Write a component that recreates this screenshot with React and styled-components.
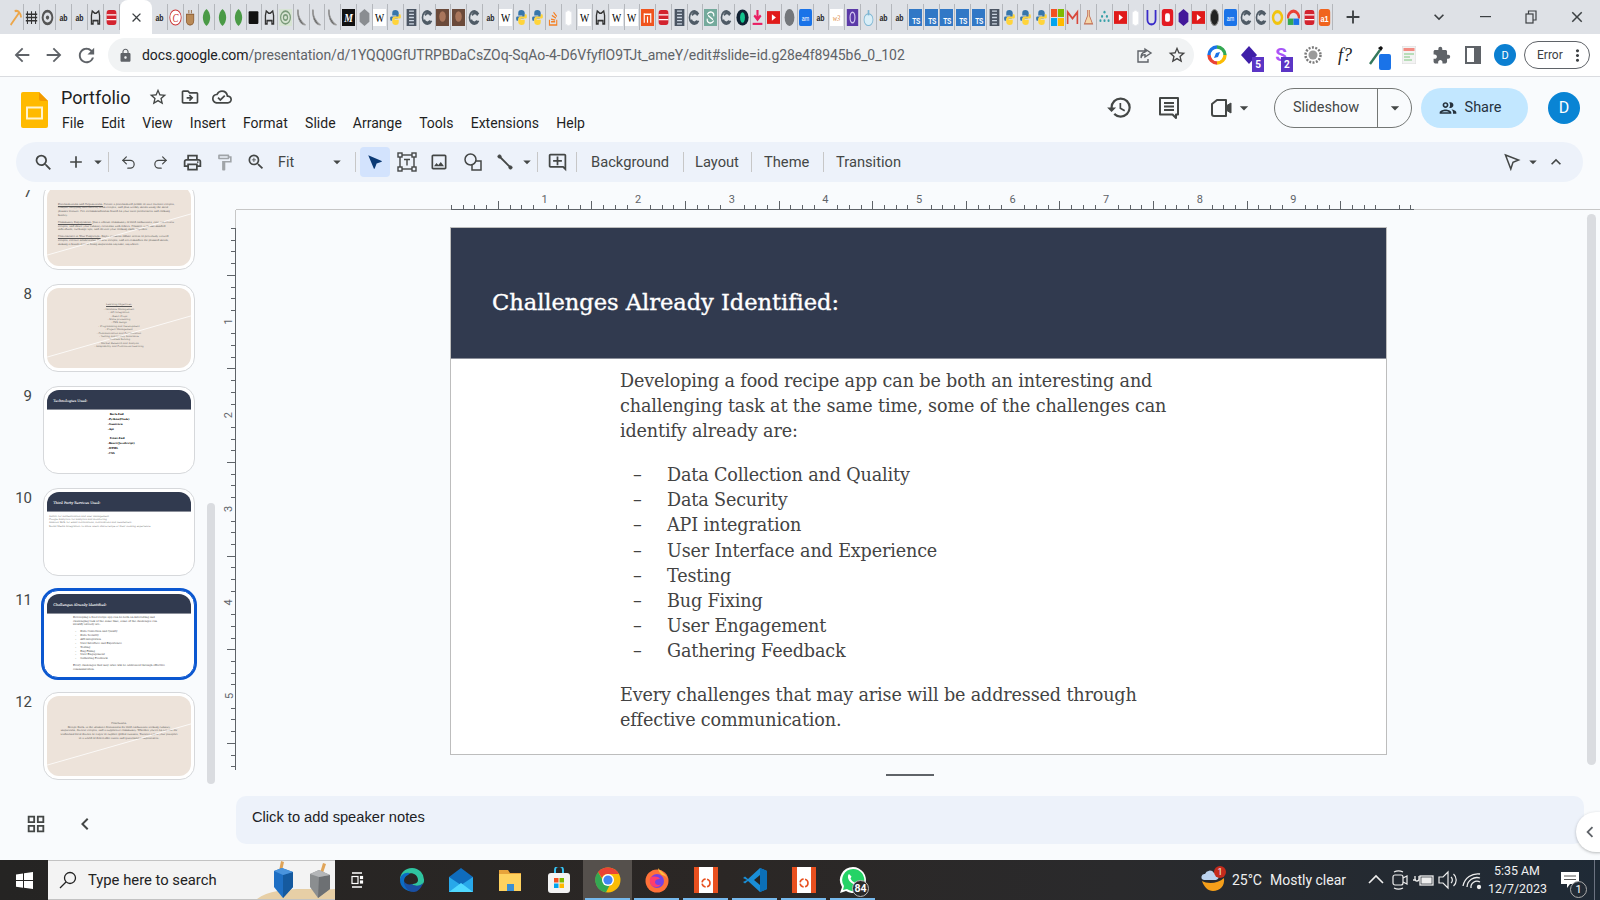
import styled, { createGlobalStyle } from "styled-components";
import { Redo2, Undo2 } from "lucide-react";
import {
  MdAdd,
  MdArrowBack,
  MdArrowDropDown,
  MdArrowForward,
  MdChevronLeft,
  MdClose,
  MdExpandLess,
  MdExtension,
  MdHistory,
  MdKeyboardArrowDown,
  MdLock,
  MdMoreVert,
  MdNearMe,
  MdOutlineAddComment,
  MdOutlineCloudDone,
  MdOutlineDriveFileMove,
  MdOutlineFormatPaint,
  MdOutlineGridView,
  MdOutlineImage,
  MdOutlinePeople,
  MdOutlinePrint,
  MdOutlineStarBorder,
  MdRefresh,
  MdSearch,
  MdZoomIn,
} from "react-icons/md";

const UI = `Roboto, "Noto Sans", sans-serif`;
const SERIF = `"DejaVu Serif", "Liberation Serif", serif`;

const GlobalStyle = createGlobalStyle`
  html, body { margin: 0; padding: 0; background: #f9fbfd; }
  body { width: 1600px; height: 900px; overflow: hidden; font-family: ${UI}; }
  * { box-sizing: border-box; }
  svg { display: block; flex-shrink: 0; }
`;

const Page = styled.div`
  width: 1600px;
  height: 900px;
  display: flex;
  flex-direction: column;
  overflow: hidden;
`;

/* ---------- browser chrome ---------- */

const TabStrip = styled.div`
  height: 34px;
  background: #dee1e6;
  display: flex;
  align-items: center;
  padding-left: 8px;
`;

const FavSlot = styled.div`
  width: ${(p) => p.$w || 16}px;
  height: 26px;
  flex-shrink: 0;
  display: flex;
  align-items: center;
  justify-content: center;
  border-right: 1px solid #b4b7bc;
`;

const ActiveTab = styled.div`
  width: 32px;
  height: 34px;
  background: #fff;
  border-radius: 8px 8px 0 0;
  display: flex;
  align-items: center;
  justify-content: center;
  color: #3c4043;
  flex-shrink: 0;
`;

const NewTab = styled.div`
  width: 20px;
  margin-left: 10px;
  color: #3c4043;
  display: flex;
  justify-content: center;
`;

const WindowButtons = styled.div`
  margin-left: auto;
  display: flex;
  align-items: center;
  color: #3c4043;
`;

const WinButton = styled.div`
  width: 46px;
  display: flex;
  justify-content: center;
`;

const AddressRow = styled.div`
  height: 42px;
  background: #fff;
  display: flex;
  align-items: center;
  padding-left: 6px;
  color: #5f6368;
`;

const NavButton = styled.div`
  width: 32px;
  display: flex;
  justify-content: center;
`;

const UrlPill = styled.div`
  width: 1086px;
  margin-left: 6px;
  height: 34px;
  border-radius: 17px;
  background: #f1f3f4;
  display: flex;
  align-items: center;
  padding: 0 7px 0 10px;
  font-size: 14px;
  color: #5f6368;
`;

const UrlText = styled.span`
  margin-left: 9px;
  letter-spacing: -0.1px;
  white-space: nowrap;
  & b {
    font-weight: 400;
    color: #202124;
  }
`;

const PillIcons = styled.div`
  margin-left: auto;
  display: flex;
  gap: 14px;
  align-items: center;
`;

const ExtRow = styled.div`
  margin-left: 7px;
  display: flex;
`;

const ExtSlot = styled.div`
  width: 32px;
  height: 34px;
  display: flex;
  align-items: center;
  justify-content: center;
  color: #5f6368;
`;

const ChromeAvatar = styled.div`
  width: 22px;
  height: 22px;
  border-radius: 50%;
  background: #0b7fd1;
  color: #fff;
  font-size: 11px;
  display: flex;
  align-items: center;
  justify-content: center;
`;

const ErrorPill = styled.div`
  margin-left: 3px;
  width: 66px;
  height: 28px;
  border-radius: 14px;
  border: 1px solid #5f6368;
  display: flex;
  align-items: center;
  justify-content: space-between;
  padding: 0 2px 0 12px;
  font-size: 12px;
  color: #3c4043;
`;

/* ---------- docs header ---------- */

const Docs = styled.div`
  height: 784px;
  background: #f9fbfd;
  border-top: 1px solid #dadce0;
  display: flex;
  flex-direction: column;
`;

const DocsHeader = styled.div`
  height: 65px;
  display: flex;
  align-items: center;
  padding: 0 20px 0 21px;
`;

const TitleBlock = styled.div`
  margin: 0 0 2px 13px;
  display: flex;
  flex-direction: column;
  gap: 7px;
`;

const TitleRow = styled.div`
  display: flex;
  align-items: center;
  gap: 12px;
  color: #444746;
`;

const DocTitle = styled.span`
  font-size: 18px;
  color: #1f1f1f;
  margin-right: 6px;
`;

const MenuBar = styled.div`
  display: flex;
  gap: 17.3px;
  margin-left: 1px;
  font-size: 14px;
  color: #1f1f1f;
`;

const HeaderActions = styled.div`
  margin: 0 0 4px auto;
  display: flex;
  align-items: center;
  gap: 18px;
  color: #444746;
`;

const HeaderIcon = styled.div`
  width: 32px;
  display: flex;
  justify-content: center;
`;

const CameraGroup = styled.div`
  width: 53px;
  padding-left: 7px;
  display: flex;
  align-items: center;
`;

const SlideshowButton = styled.div`
  width: 138px;
  height: 40px;
  border-radius: 20px;
  border: 1px solid #747775;
  display: flex;
  align-items: center;
  font-size: 14.5px;
  color: #444746;
`;

const SlideshowLabel = styled.div`
  width: 103px;
  height: 100%;
  display: flex;
  align-items: center;
  justify-content: center;
  border-right: 1px solid #747775;
`;

const SlideshowCaret = styled.div`
  flex: 1;
  display: flex;
  justify-content: center;
`;

const ShareButton = styled.div`
  margin-left: -9px;
  width: 107px;
  height: 40px;
  border-radius: 20px;
  background: #c2e7ff;
  display: flex;
  align-items: center;
  justify-content: center;
  gap: 7px;
  padding-right: 10px;
  font-size: 14.5px;
  color: #26323d;
`;

const DocAvatar = styled.div`
  margin-left: 2px;
  width: 32px;
  height: 32px;
  border-radius: 50%;
  background: #0984d4;
  color: #fff;
  font-size: 16px;
  display: flex;
  align-items: center;
  justify-content: center;
`;

/* ---------- toolbar ---------- */

const Toolbar = styled.div`
  height: 40px;
  margin: 0 17px 0 16px;
  padding: 0 12px 0 11px;
  border-radius: 20px;
  background: #edf2fa;
  display: flex;
  align-items: center;
  color: #444746;
  flex-shrink: 0;
`;

const ToolButton = styled.div`
  width: ${(p) => p.$w || 32}px;
  height: 30px;
  margin-left: ${(p) => p.$ml || 0}px;
  flex-shrink: 0;
  display: flex;
  align-items: center;
  justify-content: center;
  border-radius: 4px;
  background: ${(p) => (p.$active ? "#d3e3fd" : "transparent")};
  color: ${(p) => (p.$active ? "#0b3a75" : "inherit")};
  opacity: ${(p) => (p.$faded ? 0.45 : 1)};
`;

const SelectArrow = styled(MdNearMe)`
  transform: scaleX(-1);
`;

const ToolSep = styled.div`
  width: 1px;
  height: 20px;
  background: #c7c7c7;
  margin: 0 ${(p) => p.$r ?? 3}px 0 ${(p) => p.$l ?? 4}px;
  flex-shrink: 0;
`;

const ToolText = styled.div`
  font-size: 14.7px;
  color: #444746;
  white-space: nowrap;
  width: ${(p) => p.$w}px;
  margin: 0 ${(p) => p.$r ?? 13}px 0 ${(p) => p.$l ?? 13}px;
`;

const FitSelect = styled.div`
  width: 74px;
  display: flex;
  align-items: center;
  justify-content: space-between;
  padding-left: 6px;
  font-size: 14.4px;
`;

const ToolbarEnd = styled.div`
  margin-left: auto;
  display: flex;
  align-items: center;
`;

/* ---------- workspace ---------- */

const Workspace = styled.div`
  flex: 1;
  min-height: 0;
  display: flex;
`;

const Filmstrip = styled.div`
  width: 222px;
  flex-shrink: 0;
  display: flex;
  flex-direction: column;
`;

const SlideList = styled.div`
  position: relative;
  margin-top: 8px;
  height: 594px;
  overflow: hidden;
  display: flex;
  flex-direction: column;
  justify-content: flex-end;
  gap: 14px;
  padding-bottom: 4px;
`;

const ThumbRow = styled.div`
  display: flex;
  flex-shrink: 0;
`;

const ThumbNumber = styled.div`
  width: 32px;
  text-align: right;
  font-size: 15px;
  color: #444746;
  padding-top: 1px;
`;

const Thumb = styled.div`
  margin-left: 11px;
  width: 152px;
  height: 88px;
  padding: 3px;
  background: #fff;
  border-radius: 15px;
  border: 1px solid ${(p) => (p.$selected ? "#0b57d0" : "#d6d8db")};
  box-shadow: ${(p) => (p.$selected ? "0 0 0 2px #0b57d0" : "none")};
  overflow: hidden;
`;

const ThumbInner = styled.div`
  width: 144px;
  height: 80px;
  border-radius: 12px;
  overflow: hidden;
`;

const ThumbZoom = styled.div`
  zoom: 0.154;
`;

const FilmScrollbar = styled.div`
  position: absolute;
  left: 207px;
  bottom: 0;
  width: 8px;
  height: 281px;
  border-radius: 4px;
  background: #dadce0;
`;

const FilmFooter = styled.div`
  flex: 1;
  display: flex;
  align-items: center;
  padding: 4px 0 0 25px;
  gap: 26px;
  color: #444746;
`;

const Editor = styled.div`
  position: relative;
  flex: 1;
  display: grid;
  grid-template-columns: 14px 1fr;
  grid-template-rows: 28px 560px 26px 48px;
  align-content: start;
`;

const HRuler = styled.div`
  grid-column: 2;
  grid-row: 1;
  border-bottom: 1px solid #c7c7c7;
  padding-left: 215px;
`;

const VRuler = styled.div`
  grid-column: 1;
  grid-row: 2;
  border-right: 1px solid #c7c7c7;
`;

const RulerSvg = styled.svg`
  overflow: visible;
`;

const Stage = styled.div`
  grid-column: 2;
  grid-row: 2;
  padding: 18px 0 0 215px;
`;

const ResizeHandle = styled.div`
  grid-column: 2;
  grid-row: 3;
  padding-left: 650px;
  padding-top: 4px;
  &::before {
    content: "";
    display: block;
    width: 48px;
    height: 2px;
    background: #5f6368;
  }
`;

const Notes = styled.div`
  grid-column: 2;
  grid-row: 4;
  margin-right: 16px;
  border-radius: 10px;
  background: #edf2fa;
  display: flex;
  align-items: center;
  padding: 0 0 6px 16px;
  font-family: "Liberation Sans", Arial, sans-serif;
  font-size: 14.67px;
  color: #202124;
`;

const StageScrollbar = styled.div`
  position: absolute;
  right: 4px;
  top: 32px;
  width: 9px;
  height: 551px;
  border-radius: 5px;
  background: #dadce0;
`;

const SidePanelToggle = styled.div`
  position: absolute;
  right: -18px;
  top: 630px;
  width: 42px;
  height: 40px;
  border-radius: 20px;
  background: #fff;
  box-shadow: 0 1px 3px rgba(60, 64, 67, 0.35);
  display: flex;
  align-items: center;
  padding-left: 3px;
  color: #5f6368;
`;

/* ---------- slides ---------- */

const SlideFrame = styled.div`
  width: 935px;
  height: 526px;
  background: ${(p) => (p.$beige ? "#ede3da" : "#fff")};
  position: relative;
  display: flex;
  flex-direction: column;
  outline: ${(p) => (p.$framed ? "1px solid #bdbdbd" : "none")};
  overflow: hidden;
`;

const SlideHeader = styled.div`
  height: 131px;
  flex-shrink: 0;
  background: #313a4f;
  border-bottom: 1px solid #8b8f9a;
  display: flex;
  align-items: center;
  padding: 18px 0 0 41px;
  font-family: ${SERIF};
  font-size: 22.6px;
  letter-spacing: -0.05px;
  -webkit-text-stroke: 0.35px #fff;
  color: #fff;
`;

const SlideBody = styled.div`
  padding: ${(p) => p.$pad};
  font-family: ${SERIF};
  font-size: ${(p) => p.$size || 17.6}px;
  letter-spacing: ${(p) => p.$track ?? 0}px;
  line-height: ${(p) => p.$lh || 25}px;
  font-weight: ${(p) => p.$weight || 400};
  color: ${(p) => p.$color || "#434343"};
  text-align: ${(p) => p.$align || "left"};
  & p {
    margin: 0 0 ${(p) => p.$gap || 0}px;
  }
  & u {
    text-decoration: underline;
  }
`;

const DashList = styled.ul`
  list-style: none;
  margin: 19px 0 18px;
  padding: 0;
`;

const DashItem = styled.li`
  height: 25.2px;
  display: flex;
  &::before {
    content: "–";
    width: 47px;
    padding-left: 13px;
    flex-shrink: 0;
  }
`;

const ItemText = styled.span`
  margin-left: -13px;
`;

const BeigeStripe = styled.svg`
  position: absolute;
  inset: 0;
`;

function Stripe() {
  return (
    <BeigeStripe width="936" height="528" viewBox="0 0 936 528">
      <line x1="0" y1="449" x2="936" y2="181" stroke="#fff" strokeWidth="5" />
    </BeigeStripe>
  );
}

function ChallengesSlide({ framed }) {
  return (
    <SlideFrame $framed={framed}>
      <SlideHeader>Challenges Already Identified:</SlideHeader>
      <SlideBody $pad="10px 170px 0 169px" $track={-0.15}>
        <p>
          Developing a food recipe app can be both an interesting and
          challenging task at the same time, some of the challenges can
          identify already are:
        </p>
        <DashList>
          {[
            "Data Collection and Quality",
            "Data Security",
            "API integration",
            "User Interface and Experience",
            "Testing",
            "Bug Fixing",
            "User Engagement",
            "Gathering Feedback",
          ].map((t) => (
            <DashItem key={t}>
              <ItemText>{t}</ItemText>
            </DashItem>
          ))}
        </DashList>
        <p>
          Every challenges that may arise will be addressed through effective
          communication.
        </p>
      </SlideBody>
    </SlideFrame>
  );
}

function FeaturesSlide() {
  return (
    <SlideFrame $beige>
      <Stripe />
      <SlideBody $pad="108px 90px 0 71px" $size={17} $lh={24} $gap={22} $color="#555">
        <p>
          <u>Personalization and Organization:</u> Create a personalized
          profile to save favorite recipes, compile shopping lists directly from
          recipes, and plan weekly meals using the meal planner feature. Get
          recommendations based on your taste preferences and cooking history.
        </p>
        <p>
          <u>Community Engagement:</u> Join a vibrant community of food
          enthusiasts, rate and review recipes, and share your culinary
          creations with others. Connect with like-minded individuals, exchange
          tips, and elevate your cooking skills together.
        </p>
        <p>
          <u>Convenience at Your Fingertips:</u> Enjoy seamless offline
          access to previously viewed recipes, receive notifications for new
          recipes, and set reminders for planned meals, making it hassle-free to
          bring inspiration anytime, anywhere.
        </p>
      </SlideBody>
    </SlideFrame>
  );
}

function ObjectivesSlide() {
  return (
    <SlideFrame $beige>
      <Stripe />
      <SlideBody $pad="96px 0 0" $size={16} $lh={22} $gap={11} $align="center" $color="#555">
        <p>
          <u>Learning Objectives:</u>
        </p>
        {[
          "- Database Management",
          "- API Integration",
          "- React Props",
          "- State processing",
          "- CSS design",
          "- Programming and Development",
          "- Project Management",
          "- Communication and Collaboration",
          "- Testing and Quality Assurance",
          "- Problem Solving",
          "- Market Research and Analysis",
          "- Adaptability and Continuous Learning",
        ].map((t) => (
          <div key={t}>{t}</div>
        ))}
      </SlideBody>
    </SlideFrame>
  );
}

function TechSlide() {
  return (
    <SlideFrame>
      <SlideHeader>Technologies Used:</SlideHeader>
      <SlideBody $pad="20px 0 0 395px" $size={17} $lh={31} $color="#000" $weight={700}>
        <div>&nbsp;&nbsp;Back-End</div>
        <div>-Python(Flask)</div>
        <div>-Gunicorn</div>
        <p>-Api</p>
        <br />
        <div>&nbsp;&nbsp;Front-End</div>
        <div>-React(JavaScript)</div>
        <div>-HTML</div>
        <div>-CSS</div>
      </SlideBody>
    </SlideFrame>
  );
}

function ServicesSlide() {
  return (
    <SlideFrame>
      <SlideHeader>Third Party Services Used:</SlideHeader>
      <SlideBody $pad="16px 0 0 13px" $size={16} $lh={22} $color="#666">
        <div>Auth0: for authentication and user management</div>
        <div>Google Analytics: for analytics and monitoring</div>
        <div>Amazon SES: for email notifications, notifications and newsletters.</div>
        <div>Social Media Integration: to allow users share recipe or their cooking experience</div>
      </SlideBody>
    </SlideFrame>
  );
}

function ConclusionSlide() {
  return (
    <SlideFrame $beige>
      <Stripe />
      <SlideBody $pad="168px 84px 0" $size={17} $lh={24} $align="center" $color="#555">
        <div>Conclusion:</div>
        Recipe Rack: is the ultimate destination for food enthusiasts
        seeking culinary inspiration, diverse recipes, and a supportive
        community. Whether you're on a quest for traditional local flavors or
        eager to explore global cuisines, Tastiest app is your passport to a
        world of delectable tastes and gastronomic experiences.
      </SlideBody>
    </SlideFrame>
  );
}

const THUMBS = [
  { n: 7, Slide: FeaturesSlide },
  { n: 8, Slide: ObjectivesSlide },
  { n: 9, Slide: TechSlide },
  { n: 10, Slide: ServicesSlide },
  { n: 11, Slide: ChallengesSlide, selected: true },
  { n: 12, Slide: ConclusionSlide },
];

/* ---------- small drawings ---------- */

const RULE = "#5f6368";

function HorizontalRuler() {
  const ticks = [];
  for (let k = 0; k <= 82; k++) {
    if (k % 8 === 0 && k > 0) continue;
    const x = Math.round(k * 11.7) + 0.5;
    const major = k % 8 === 4;
    ticks.push(<line key={k} x1={x} x2={x} y1={major ? 19 : 23} y2="27" stroke={RULE} />);
  }
  return (
    <RulerSvg width="963" height="28">
      <line x1="0" x2="963" y1="27.5" y2="27.5" stroke={RULE} />
      {ticks}
      {[1, 2, 3, 4, 5, 6, 7, 8, 9].map((n) => (
        <text key={n} x={n * 93.6} y="21" textAnchor="middle" fontSize="11" fontFamily={UI} fill="#5f6368">
          {n}
        </text>
      ))}
    </RulerSvg>
  );
}

function VerticalRuler() {
  const ticks = [];
  for (let k = 0; k <= 46; k++) {
    if (k % 8 === 0 && k > 0) continue;
    const y = 18 + Math.round(k * 11.7) + 0.5;
    const major = k % 8 === 4;
    ticks.push(<line key={k} y1={y} y2={y} x1={major ? 5 : 9} x2="13" stroke={RULE} />);
  }
  return (
    <RulerSvg width="14" height="560">
      <line x1="13.5" x2="13.5" y1="18" y2="560" stroke={RULE} />
      {ticks}
      {[1, 2, 3, 4, 5].map((n) => {
        const y = 18 + n * 93.6;
        return (
          <text key={n} x="7" y={y} transform={`rotate(-90 7 ${y})`} textAnchor="middle" dominantBaseline="central" fontSize="11" fontFamily={UI} fill="#5f6368">
            {n}
          </text>
        );
      })}
    </RulerSvg>
  );
}

function SlidesLogo() {
  return (
    <svg width="27" height="36" viewBox="0 0 27 36">
      <path d="M2 0h16l9 9v25a2 2 0 0 1-2 2H2a2 2 0 0 1-2-2V2a2 2 0 0 1 2-2z" fill="#ffba00" />
      <path d="M18 0l9 9h-7a2 2 0 0 1-2-2z" fill="#f29900" />
      <rect x="6" y="15.5" width="15" height="11" fill="none" stroke="#fff3d0" strokeWidth="2" />
    </svg>
  );
}

function TextBoxIcon() {
  return (
    <svg width="20" height="20" viewBox="0 0 20 20" fill="none" stroke="currentColor" strokeWidth="1.4">
      <rect x="3" y="3" width="14" height="14" />
      <rect x="1" y="1" width="4" height="4" fill="#edf2fa" />
      <rect x="15" y="1" width="4" height="4" fill="#edf2fa" />
      <rect x="1" y="15" width="4" height="4" fill="#edf2fa" />
      <rect x="15" y="15" width="4" height="4" fill="#edf2fa" />
      <path d="M7 7.5h6M10 7.5v6" />
    </svg>
  );
}

function ShapeIcon() {
  return (
    <svg width="20" height="20" viewBox="0 0 20 20" fill="none" stroke="currentColor" strokeWidth="1.5">
      <circle cx="7.5" cy="7.5" r="5.5" />
      <path d="M13 9h5v9H9v-5" />
    </svg>
  );
}

function LineIcon() {
  return (
    <svg width="18" height="18" viewBox="0 0 18 18" stroke="currentColor" fill="currentColor">
      <path d="M3 3l12 12" strokeWidth="1.8" />
      <circle cx="3.5" cy="3.5" r="1.6" />
      <circle cx="14.5" cy="14.5" r="1.6" />
    </svg>
  );
}

function PointerOutline() {
  return (
    <svg width="18" height="18" viewBox="0 0 18 18" fill="none" stroke="currentColor" strokeWidth="1.5">
      <path d="M2.5 2l13 5-5.5 2.2L7.8 16z" />
    </svg>
  );
}

function CommentsIcon() {
  return (
    <svg width="22" height="24" viewBox="0 0 22 24" fill="none" stroke="#444746" strokeWidth="2">
      <path d="M2 2h18v16.500h-2V22l-3.500-3.500H2z" strokeLinejoin="round" />
      <path d="M6 7h10M6 10.500h10M6 14h10" />
    </svg>
  );
}

function CameraIcon() {
  return (
    <svg width="24" height="20" viewBox="0 0 24 20" fill="none" stroke="#444746" strokeWidth="2">
      <path d="M2 6l5-4h9v16H4a2 2 0 0 1-2-2z" strokeLinejoin="round" />
      <path d="M16 8l5-3v10l-5-3" fill="#444746" strokeWidth="1" />
    </svg>
  );
}

function ShareArrow() {
  return (
    <svg width="18" height="18" viewBox="0 0 18 18" fill="none" stroke="#5f6368" strokeWidth="1.4">
      <path d="M12 5H3v11h10v-3" />
      <path d="M10 3l6 4-6 4V8.600C8 8.600 6.500 9.600 6 12c0-3.600 1.500-5.600 4-6z" />
    </svg>
  );
}

function RestoreIcon() {
  return (
    <svg width="12" height="14" viewBox="0 0 12 14" fill="none" stroke="#3c4043" strokeWidth="1.2">
      <rect x="1" y="4" width="7" height="9" />
      <path d="M3.500 4V1H11v9H8" />
    </svg>
  );
}

/* favicon drawings, one per site */
const db = (c) => (
  <>
    <rect x="2" y="1" width="12" height="14" rx="3" fill={c} />
    <path d="M2 5.500h12M2 10h12" stroke="#fff" />
  </>
);
const lead = <path d="M8 0C2 4 2 12 8 16c6-4 6-12 0-16z" fill="#4a9a46" />;
const cat = (
  <path d="M3 14V6l1-4 3 2h2l3-2 1 4v8h-2v-3H5v3z" fill="none" stroke="#333" strokeWidth="1.6" />
);
const py = (
  <>
    <path d="M8 1C5 1 4 2 4 4v2h5v1H3C1 7 1 9 2 11h2V9h5c2 0 3-1 3-3V4c0-2-2-3-4-3z" fill="#3776ab" />
    <path d="M8 15c3 0 4-1 4-3v-2H7V9h6c2 0 2-2 1-4h-2v2H7c-2 0-3 1-3 3v2c0 2 2 3 4 3z" fill="#ffd43b" />
  </>
);
const wiki = (
  <>
    <rect width="16" height="16" fill="#fff" />
    <text x="8" y="12" textAnchor="middle" fontFamily="Liberation Serif" fontSize="12" fill="#000">W</text>
  </>
);
const ab = (
  <text x="8" y="11" textAnchor="middle" fontFamily="Liberation Sans" fontWeight="700" fontSize="8.5" fill="#222">ab</text>
);
const ts = (
  <>
    <rect width="16" height="16" fill="#3178c6" />
    <text x="9" y="14" textAnchor="middle" fontFamily="Liberation Sans" fontWeight="700" fontSize="8" fill="#fff">TS</text>
  </>
);
const film = (
  <>
    <rect x="2" width="12" height="16" fill="#4b5563" />
    <path d="M5 2h6M5 5h6M5 8h6M5 11h6M5 14h6" stroke="#cbd5e1" strokeWidth="1.2" />
  </>
);
const spiral = (
  <path d="M13 5a6 6 0 1 0 0 6M5 6a4 4 0 0 1 7 0M4 10a4 4 0 0 0 7 1" fill="none" stroke="#4f5b66" strokeWidth="2" />
);
const hook = <path d="M4 1c0 7 3 11 9 14-6 0-10-5-10-14z" fill="#444" stroke="#999" />;
const yt = (
  <>
    <rect y="2" width="16" height="12" fill="#e01a1a" />
    <path d="M6 5l5 3-5 3z" fill="#fff" />
  </>
);
const photo = (
  <>
    <rect width="16" height="16" fill="#6b4a3a" />
    <ellipse cx="8" cy="7" rx="4" ry="5" fill="#a9765c" />
  </>
);
const hex = (c) => <path d="M8 0l6 4v8l-6 4-6-4V4z" fill={c} />;

const FAVICONS = {
  pick: <path d="M2 15L12 4M7 2c4-1 7 1 8 6" stroke="#eca64a" strokeWidth="2" fill="none" />,
  grid: <path d="M3 2v12M8 2v12M13 2v12M1 5h14M1 8h14M1 11h14" stroke="#333" strokeWidth="1.3" />,
  ring: (
    <>
      <circle cx="8" cy="8" r="6" fill="none" stroke="#555" strokeWidth="2.400" />
      <circle cx="8" cy="8" r="2" fill="#555" />
    </>
  ),
  ab,
  cat,
  red: db("#d3232f"),
  cc: (
    <>
      <circle cx="8" cy="8" r="7" fill="#fff" stroke="#c33" />
      <text x="8" y="12" textAnchor="middle" fontFamily="Liberation Serif" fontStyle="italic" fontSize="11" fill="#c33">C</text>
    </>
  ),
  coffee: <path d="M3 5h9v6a4 4 0 0 1-4 4H7a4 4 0 0 1-4-4zM6 1v3M9 1v3" fill="#b98a57" stroke="#8a5a2f" />,
  leaf: lead,
  book: <rect x="2" y="2" width="12" height="12" rx="1" fill="#111" />,
  target: (
    <>
      <rect width="16" height="16" fill="#d7e4d3" />
      <circle cx="8" cy="8" r="6" fill="none" stroke="#7a9a7a" strokeWidth="1.5" />
      <circle cx="8" cy="8" r="2.500" fill="none" stroke="#7a9a7a" strokeWidth="1.5" />
    </>
  ),
  hook,
  m: (
    <>
      <rect width="16" height="16" fill="#111" />
      <text x="8" y="12.500" textAnchor="middle" fontFamily="Liberation Serif" fontStyle="italic" fontWeight="700" fontSize="12" fill="#fff">M</text>
    </>
  ),
  grey: hex("#8a8d91"),
  wiki,
  py,
  film,
  spiral,
  photo,
  so: <path d="M3 10v5h9v-5M5 12h5M5 9.500l5 1M6 6l5 2.500M8 3l4 4" stroke="#f48024" strokeWidth="1.3" fill="none" />,
  white: <path d="M4 3l4-2 4 2v11l-4 2-4-2z" fill="#fff" stroke="#e5e7eb" />,
  orange: (
    <>
      <rect width="16" height="16" fill="#f0541e" />
      <path d="M4 4v9M8 7v6M12 4v9M4 5h8" stroke="#fff" strokeWidth="1.4" />
    </>
  ),
  openai: (
    <>
      <rect width="16" height="16" fill="#74aa9c" />
      <path d="M4 5c3-4 9-2 8 2M12 11c-3 4-9 2-8-2M5 6l6 4" stroke="#fff" strokeWidth="1.3" fill="none" />
    </>
  ),
  greenDot: (
    <>
      <circle cx="8" cy="8" r="7.500" fill="#123" />
      <ellipse cx="8" cy="8" rx="3" ry="5" fill="#14c38e" />
    </>
  ),
  pink: (
    <>
      <path d="M8 1v8M4 6l4 4 4-4" stroke="#e91e63" strokeWidth="2.600" fill="none" />
      <path d="M2 14h12" stroke="#e91e63" strokeWidth="2" />
    </>
  ),
  yt,
  stone: <ellipse cx="8" cy="8" rx="6" ry="8" fill="#74777b" />,
  blue: (
    <>
      <rect width="16" height="16" rx="2" fill="#1a73e8" />
      <text x="8" y="11" textAnchor="middle" fontFamily="Liberation Sans" fontSize="6.500" fill="#fff">am</text>
    </>
  ),
  w3: (
    <>
      <rect width="16" height="16" fill="#fff" />
      <text x="8" y="11" textAnchor="middle" fontFamily="Liberation Serif" fontStyle="italic" fontSize="8" fill="#e08a3c">w3</text>
    </>
  ),
  purple: (
    <>
      <rect x="1" width="14" height="16" fill="#5b3aa8" />
      <ellipse cx="8" cy="8" rx="3" ry="5" fill="none" stroke="#cfc3ee" strokeWidth="1.5" />
    </>
  ),
  drop: (
    <>
      <circle cx="8" cy="10" r="5.500" fill="#d9eef7" stroke="#7cb6d3" />
      <path d="M8 1v5" stroke="#7cb6d3" strokeWidth="2" />
    </>
  ),
  ts,
  ms: (
    <>
      <rect width="7.500" height="7.500" fill="#f25022" />
      <rect x="8.500" width="7.500" height="7.500" fill="#7fba00" />
      <rect y="8.500" width="7.500" height="7.500" fill="#00a4ef" />
      <rect x="8.500" y="8.500" width="7.500" height="7.500" fill="#ffb900" />
    </>
  ),
  gmail: <path d="M2 14V3l6 6 6-6v11" fill="none" stroke="#d8483b" strokeWidth="2" />,
  flask: <path d="M7 1v5L3 14h10L9 6V1" fill="#f5d6a8" stroke="#c06a50" />,
  dots: (
    <g fill="#37a0a8">
      <circle cx="8" cy="3" r="1.300" />
      <circle cx="5" cy="7" r="1.300" />
      <circle cx="11" cy="7" r="1.300" />
      <circle cx="3" cy="11" r="1.300" />
      <circle cx="8" cy="11" r="1.300" />
      <circle cx="13" cy="11" r="1.300" />
    </g>
  ),
  u: <path d="M3 1v9c0 6 10 6 10 0V1" fill="none" stroke="#3a2cc9" strokeWidth="2.200" />,
  redShield: (
    <>
      <rect x="1" width="14" height="16" rx="3" fill="#e31b23" />
      <rect x="5" y="4" width="6" height="8" rx="2" fill="#fff" />
    </>
  ),
  purpleHex: hex("#42189a"),
  mouse: <ellipse cx="8" cy="8" rx="5" ry="7.500" fill="#222" stroke="#888" />,
  gold: <circle cx="8" cy="8" r="5.500" fill="none" stroke="#f1c40f" strokeWidth="3" />,
  google: (
    <>
      <path d="M1 9a7 7 0 0 1 14 0" fill="none" stroke="#ea4335" strokeWidth="3" />
      <rect x="1" y="9" width="7" height="6" fill="#34a853" />
      <rect x="8" y="9" width="7" height="6" fill="#1a73e8" />
    </>
  ),
  a1: (
    <>
      <rect x="1" width="14" height="16" rx="3" fill="#f0641e" />
      <text x="8" y="12" textAnchor="middle" fontFamily="Liberation Sans" fontWeight="700" fontSize="9" fill="#fff">a1</text>
    </>
  ),
};

const TABS_LEFT = ["pick", "grid", "ring", "ab", "ab", "cat", "red"];
const TABS_RIGHT = [
  "ab", "cc", "coffee", "leaf", "leaf", "leaf", "book", "cat", "target", "hook", "hook", "hook",
  "m", "grey", "wiki", "py", "film", "spiral", "photo", "photo", "spiral", "ab", "wiki", "py",
  "py", "so", "white", "wiki", "cat", "wiki", "wiki", "orange", "red", "film", "spiral", "openai",
  "spiral", "greenDot", "pink", "yt", "stone", "blue", "ab", "w3", "purple", "drop", "ab", "ab",
  "ts", "ts", "ts", "ts", "ts", "film", "py", "py", "py", "ms", "gmail", "flask", "dots", "yt",
  "white", "u", "redShield", "purpleHex", "yt", "mouse", "blue", "spiral", "spiral", "gold",
  "google", "red", "a1",
];

function Favicon({ kind, w }) {
  return (
    <FavSlot $w={w}>
      <svg width="13" height="17" viewBox="0 0 16 16" preserveAspectRatio="none">
        {FAVICONS[kind]}
      </svg>
    </FavSlot>
  );
}

/* extension icons in the address row */
function ExtCompass() {
  return (
    <svg width="20" height="20" viewBox="0 0 20 20" fill="none" strokeWidth="3.400">
      <path d="M10 2a8 8 0 0 1 8 8" stroke="#34a853" />
      <path d="M18 10a8 8 0 0 1-8 8" stroke="#fbbc04" />
      <path d="M10 18a8 8 0 0 1-8-8" stroke="#ea4335" />
      <path d="M2 10a8 8 0 0 1 8-8" stroke="#1a73e8" />
      <path d="M13 7l-2 5-4 1 2-5z" fill="#1a73e8" stroke="none" />
    </svg>
  );
}

const ExtBadge = styled.div`
  position: absolute;
  right: -6px;
  bottom: -7px;
  width: 12px;
  height: 15px;
  background: #5b35c5;
  color: #fff;
  font-size: 10px;
  font-weight: 700;
  display: flex;
  align-items: center;
  justify-content: center;
`;

const ExtIcon = styled.div`
  position: relative;
  display: flex;
`;

const ItalicF = styled.span`
  font-family: "Liberation Serif", serif;
  font-style: italic;
  font-size: 18px;
  color: #222;
`;

function ExtGem() {
  return (
    <ExtIcon>
      <svg width="18" height="20" viewBox="0 0 18 20">
        <path d="M9 1l8 9-8 9-8-9z" fill="#3f1fa8" />
      </svg>
      <ExtBadge>5</ExtBadge>
    </ExtIcon>
  );
}

const ExtS = styled.span`
  font-size: 19px;
  font-weight: 700;
  color: #a855f7;
  line-height: 20px;
`;

function ExtGear() {
  return (
    <svg width="18" height="20" viewBox="0 0 18 20">
      <circle cx="9" cy="10" r="7.500" fill="none" stroke="#7a7a7a" strokeWidth="2.500" strokeDasharray="2 1.400" />
      <circle cx="9" cy="10" r="4.500" fill="#9a9a9a" />
    </svg>
  );
}

const DropperBox = styled.svg`
  margin: 9px -5px -5px -5px;
`;

function ExtDropper() {
  return (
    <ExtIcon>
      <svg width="16" height="20" viewBox="0 0 16 20" fill="none">
        <path d="M2 19L12 5" stroke="#34785c" strokeWidth="2.400" />
        <path d="M10 3l3-2 2 2-2 3z" fill="#111" />
      </svg>
      <DropperBox width="12" height="16" viewBox="0 0 12 16">
        <rect width="12" height="16" rx="2" fill="#1a73e8" />
      </DropperBox>
    </ExtIcon>
  );
}

function ExtNote() {
  return (
    <svg width="14" height="18" viewBox="0 0 14 18">
      <rect width="14" height="18" fill="#f3f3f3" stroke="#ddd" />
      <rect x="1.500" y="2" width="11" height="3" fill="#f28b82" />
      <path d="M2 8h10M2 11h6M2 14h8" stroke="#a5d6a7" strokeWidth="1.400" />
    </svg>
  );
}

function ExtPanel() {
  return (
    <svg width="16" height="18" viewBox="0 0 16 18">
      <rect x="1" y="1" width="14" height="16" fill="none" stroke="#5f6368" strokeWidth="2" />
      <rect x="9" y="1" width="6" height="16" fill="#5f6368" />
    </svg>
  );
}

/* ---------- taskbar ---------- */

const Taskbar = styled.div`
  height: 40px;
  flex-shrink: 0;
  background: linear-gradient(90deg, #252423 0%, #2b2725 45%, #2a2a2c 70%, #1f2a36 100%);
  display: flex;
  align-items: stretch;
  color: #fff;
`;

const StartButton = styled.div`
  width: 48px;
  display: flex;
  align-items: center;
  justify-content: center;
`;

const SearchBox = styled.div`
  width: 287px;
  background: #f3f3f3;
  border-top: 1px solid #c2c2c2;
  border-bottom: 1px solid #c2c2c2;
  display: flex;
  align-items: center;
  padding-left: 11px;
  color: #222;
  font-size: 14.8px;
  position: relative;
  overflow: hidden;
`;

const SearchLabel = styled.span`
  margin-left: 11px;
`;

const SearchArt = styled.svg`
  position: absolute;
  right: 0;
  top: 0;
`;

const TaskView = styled.div`
  width: 48px;
  margin-right: 4px;
  display: flex;
  align-items: center;
  justify-content: center;
`;

const TaskApp = styled.div`
  position: relative;
  width: 49px;
  display: flex;
  align-items: center;
  justify-content: center;
  background: ${(p) => (p.$active ? "#55504c" : "transparent")};
  &::after {
    content: "";
    position: absolute;
    left: 2px;
    right: 2px;
    bottom: 0;
    height: 2px;
    background: ${(p) => (p.$open ? "#76b9ed" : "transparent")};
  }
`;

const CountBadge = styled.div`
  position: absolute;
  right: 8px;
  bottom: 3px;
  width: 17px;
  height: 17px;
  border-radius: 50%;
  border: 1px solid #bbb;
  background: #2b2b2b;
  color: #fff;
  font-size: 10.5px;
  font-weight: 700;
  display: flex;
  align-items: center;
  justify-content: center;
`;

const Tray = styled.div`
  margin-left: auto;
  display: flex;
  align-items: center;
  padding-right: 5px;
`;

const Weather = styled.div`
  display: flex;
  align-items: center;
  width: 145px;
  white-space: nowrap;
  font-size: 14px;
  color: #f0f0f0;
  margin-right: 18px;
`;

const WeatherIcon = styled.div`
  position: relative;
  width: 32px;
  display: flex;
`;

const AlertDot = styled.div`
  position: absolute;
  left: 13px;
  top: -2px;
  width: 12px;
  height: 12px;
  border-radius: 50%;
  background: #c42b1c;
  font-size: 9px;
  display: flex;
  align-items: center;
  justify-content: center;
`;

const Temp = styled.span`
  margin-right: 8px;
`;

const TrayIcon = styled.div`
  width: 24px;
  display: flex;
  justify-content: center;
`;

const Clock = styled.div`
  width: 58px;
  margin-left: 4px;
  text-align: center;
  font-size: 12.4px;
  line-height: 18px;
  color: #f0f0f0;
`;

const Notify = styled.div`
  position: relative;
  width: 48px;
  display: flex;
  justify-content: center;
  margin-right: 0;
`;

const NotifyBadge = styled.div`
  position: absolute;
  right: 7px;
  bottom: -9px;
  width: 17px;
  height: 17px;
  border-radius: 50%;
  border: 1px solid #aaa;
  background: #222b35;
  font-size: 11px;
  display: flex;
  align-items: center;
  justify-content: center;
`;

const ShowDesktop = styled.div`
  width: 1px;
  height: 100%;
  background: #6b7280;
`;

function WindowsLogo() {
  return (
    <svg width="17" height="17" viewBox="0 0 17 17" fill="#fff">
      <path d="M0 2.400l7-1v6.700H0zM8 1.200L17 0v8.100H8zM0 9h7v6.700l-7-1zM8 9h9v8l-9-1.300z" />
    </svg>
  );
}

function SearchGlass() {
  return (
    <svg width="18" height="18" viewBox="0 0 18 18" fill="none" stroke="#222" strokeWidth="1.300">
      <circle cx="11" cy="7" r="5.500" />
      <path d="M7 11l-6 6" />
    </svg>
  );
}

function Dreidels() {
  return (
    <SearchArt width="78" height="38" viewBox="0 0 78 38">
      <path d="M0 38c10-8 30-10 45-10s25 1 33 0v10z" fill="#e7cfa6" />
      <path d="M24 0l3 1-2 9h-3z" fill="#e0a458" />
      <path d="M17 10l8-3 11 4v15l-10 11-9-11z" fill="#1e6fc4" />
      <path d="M26 14l10-3v15l-10 11z" fill="#155a9f" />
      <path d="M17 10l8-3 11 4-10 3z" fill="#4a94dd" />
      <path d="M66 2l3 1-3 9h-3z" fill="#e0a458" />
      <path d="M53 13l9-4 11 5v14l-12 9-8-11z" fill="#8b8e90" />
      <path d="M62 16l11-2v14l-12 9z" fill="#6d7073" />
      <path d="M53 13l9-4 11 5-11 2z" fill="#b4b6b8" />
    </SearchArt>
  );
}

function TaskViewIcon() {
  return (
    <svg width="16" height="16" viewBox="0 0 16 16" fill="none" stroke="#fff" strokeWidth="1.200">
      <path d="M1 1h10M1 15h10" strokeWidth="1.500" />
      <rect x="1" y="4.500" width="6" height="7" />
      <rect x="9.500" y="4.500" width="2" height="2" fill="#fff" />
      <rect x="9.500" y="9" width="2" height="2" fill="#fff" />
    </svg>
  );
}

function EdgeIcon() {
  return (
    <svg width="26" height="26" viewBox="0 0 26 26">
      <path d="M13 1a12 12 0 0 1 12 13c0 3-3 5-7 5-3 0-5-1-5-2 3 0 6-1 6-4 0-5-6-8-10-6C4 8 2 11 1 13 1 6 6 1 13 1z" fill="#2fc4a0" />
      <path d="M1 13c0-5 5-8 9-7 3 1-5 2-5 8 0 5 6 9 11 10C9 26 1 21 1 13z" fill="#0b6cc4" />
      <path d="M13 17c2 2 7 3 11-1-2 6-6 9-9 9-5 0-10-4-10-11 1 3 5 4 8 3z" fill="#1a4fa3" />
    </svg>
  );
}

function MailIcon() {
  return (
    <svg width="24" height="24" viewBox="0 0 24 24">
      <path d="M0 9l12-9 12 9v15H0z" fill="#0f6cbd" />
      <path d="M0 9l12 8 12-8v15H0z" fill="#28a8ea" />
      <path d="M0 24l12-9 12 9z" fill="#50d9ff" />
    </svg>
  );
}

function ExplorerIcon() {
  return (
    <svg width="24" height="24" viewBox="0 0 24 24">
      <path d="M1 2h9l2 3h11v18H1z" fill="#e8a33a" />
      <rect x="1" y="6" width="22" height="17" fill="#ffd25f" />
      <rect x="9" y="16" width="7" height="7" fill="#3b8fd4" />
    </svg>
  );
}

function StoreIcon() {
  return (
    <svg width="24" height="26" viewBox="0 0 24 26">
      <path d="M8 6V3a4 4 0 0 1 8 0v3" fill="none" stroke="#35c1f1" strokeWidth="2" />
      <rect x="1" y="6" width="22" height="20" rx="3" fill="#f3f3f3" />
      <rect x="7" y="11" width="4.500" height="4.500" fill="#f25022" />
      <rect x="12.500" y="11" width="4.500" height="4.500" fill="#7fba00" />
      <rect x="7" y="16.500" width="4.500" height="4.500" fill="#00a4ef" />
      <rect x="12.500" y="16.500" width="4.500" height="4.500" fill="#ffb900" />
    </svg>
  );
}

function ChromeIcon() {
  return (
    <svg width="26" height="26" viewBox="0 0 26 26">
      <circle cx="13" cy="13" r="12.500" fill="#fbbc04" />
      <path d="M13 .5A12.500 12.500 0 0 1 24 7H13a6 6 0 0 0-6 4L3 5A12.500 12.500 0 0 1 13 .5z" fill="#ea4335" />
      <path d="M3 5l5.500 9.500a6 6 0 0 0 6 4L11 25.300A12.500 12.500 0 0 1 3 5z" fill="#34a853" />
      <circle cx="13" cy="13" r="6" fill="#fff" />
      <circle cx="13" cy="13" r="4.600" fill="#4285f4" />
    </svg>
  );
}

function FirefoxIcon() {
  return (
    <svg width="26" height="26" viewBox="0 0 26 26">
      <circle cx="13" cy="14" r="11.500" fill="#ff7139" />
      <path d="M14 1c3 4 9 6 10 13 0-3-3-6-6-6-2-2-4-4-4-7z" fill="#ffbd3e" />
      <circle cx="13" cy="14" r="7" fill="#7542e5" />
      <path d="M6 11c3-2 8-2 10 1-3 0-5 1-5 3 0 3 4 4 6 2-2 5-13 4-11-6z" fill="#ff3d6e" />
    </svg>
  );
}

function OfficeDocIcon() {
  return (
    <svg width="24" height="26" viewBox="0 0 24 26">
      <rect x="0" width="24" height="26" fill="#e8501f" />
      <rect x="5" width="14" height="26" fill="#fff" />
      <circle cx="12" cy="16" r="4" fill="none" stroke="#e8501f" strokeWidth="1.600" strokeDasharray="5 1.500" />
    </svg>
  );
}

function VsCodeIcon() {
  return (
    <svg width="24" height="26" viewBox="0 0 24 26">
      <path d="M17 1l7 3v18l-7 3L5 14l-3 2.500L0 15l4-2-4-2 2-1.500L5 12z" fill="#1a8ed6" />
      <path d="M17 1l7 3v18l-7 3z" fill="#0b6fb8" />
      <path d="M17 8v10l-6-5z" fill="#252423" />
    </svg>
  );
}

function WhatsAppIcon() {
  return (
    <svg width="28" height="28" viewBox="0 0 28 28">
      <path d="M14 1a13 13 0 0 0-11 20L1 27l6-2A13 13 0 1 0 14 1z" fill="#fff" />
      <path d="M14 3a11 11 0 0 0-9 17l-1 4 4-1A11 11 0 1 0 14 3z" fill="#25d366" />
      <path d="M10 8c-2 2-1 6 2 8.500s6 3.500 8 1.500l-2.500-2.500-2 1c-2-1-3-2-4-4l1-2z" fill="#fff" />
    </svg>
  );
}

function WeatherGlyph() {
  return (
    <svg width="24" height="24" viewBox="0 0 24 24">
      <path d="M1 13c5 3 16 3 22-3 1 8-4 13-11 13-5 0-9-4-11-10z" fill="#f59f1a" />
      <path d="M3 12a3 3 0 0 1 1-6 5 5 0 0 1 9-1 3.500 3.500 0 0 1 2 7z" fill="#bcd3ef" />
    </svg>
  );
}

const TRAY_ICONS = [
  <path key="c" d="M5 15l7-7 7 7" fill="none" stroke="#eee" strokeWidth="1.600" />,
  <g key="m" fill="none" stroke="#eee" strokeWidth="1.200">
    <rect x="5" y="7" width="10" height="10" rx="2" />
    <path d="M15 10l4-2v8l-4-2M6 4c3-1.500 6-1.500 9 0M6 20c3 1.500 6 1.500 9 0" />
  </g>,
  <g key="b" fill="none" stroke="#eee" strokeWidth="1.300">
    <rect x="8" y="8" width="13" height="9" />
    <rect x="10" y="10" width="9" height="5" fill="#eee" />
    <path d="M1 12h3M3 8v3a2 2 0 0 0 4 0V8" />
  </g>,
  <g key="v" fill="none" stroke="#eee" strokeWidth="1.200">
    <path d="M3 9h4l5-5v16l-5-5H3z" />
    <path d="M15 9a4 4 0 0 1 0 6M17.500 6a8 8 0 0 1 0 12" />
  </g>,
  <g key="w" fill="none" stroke="#eee" strokeWidth="1.300">
    <path d="M3 18A15 15 0 0 1 20 6M7 19a10 10 0 0 1 13-9M11 20a6 6 0 0 1 9-6" />
    <circle cx="19" cy="19" r="1.500" fill="#eee" />
  </g>,
];

const TASK_APPS = [
  { Icon: EdgeIcon },
  { Icon: MailIcon },
  { Icon: ExplorerIcon },
  { Icon: StoreIcon },
  { Icon: ChromeIcon, active: true, open: true },
  { Icon: FirefoxIcon, open: true },
  { Icon: OfficeDocIcon, open: true },
  { Icon: VsCodeIcon, open: true },
  { Icon: OfficeDocIcon, open: true },
  { Icon: WhatsAppIcon, open: true, badge: "84" },
];

const MENU = ["File", "Edit", "View", "Insert", "Format", "Slide", "Arrange", "Tools", "Extensions", "Help"];

export default function App() {
  return (
    <Page>
      <GlobalStyle />
      <TabStrip>
        {TABS_LEFT.map((k, i) => (
          <Favicon key={i} kind={k} />
        ))}
        <ActiveTab>
          <MdClose size={15} />
        </ActiveTab>
        {TABS_RIGHT.map((k, i) => (
          <Favicon key={i} kind={k} w={15.75} />
        ))}
        <NewTab>
          <MdAdd size={22} />
        </NewTab>
        <WindowButtons>
          <WinButton>
            <MdKeyboardArrowDown size={20} />
          </WinButton>
          <WinButton>
            <svg width="11" height="2"><rect width="11" height="1.200" fill="#3c4043" /></svg>
          </WinButton>
          <WinButton>
            <RestoreIcon />
          </WinButton>
          <WinButton>
            <MdClose size={18} />
          </WinButton>
        </WindowButtons>
      </TabStrip>

      <AddressRow>
        <NavButton><MdArrowBack size={22} /></NavButton>
        <NavButton><MdArrowForward size={22} /></NavButton>
        <NavButton><MdRefresh size={23} /></NavButton>
        <UrlPill>
          <MdLock size={15} />
          <UrlText>
            <b>docs.google.com</b>/presentation/d/1YQQ0GfUTRPBDaCsZOq-SqAo-4-D6VfyflO9TJt_ameY/edit#slide=id.g28e4f8945b6_0_102
          </UrlText>
          <PillIcons>
            <ShareArrow />
            <MdOutlineStarBorder size={20} color="#444" />
          </PillIcons>
        </UrlPill>
        <ExtRow>
          <ExtSlot><ExtCompass /></ExtSlot>
          <ExtSlot><ExtGem /></ExtSlot>
          <ExtSlot>
            <ExtIcon>
              <ExtS>S</ExtS>
              <ExtBadge>2</ExtBadge>
            </ExtIcon>
          </ExtSlot>
          <ExtSlot><ExtGear /></ExtSlot>
          <ExtSlot><ItalicF>f?</ItalicF></ExtSlot>
          <ExtSlot><ExtDropper /></ExtSlot>
          <ExtSlot><ExtNote /></ExtSlot>
          <ExtSlot><MdExtension size={19} /></ExtSlot>
          <ExtSlot><ExtPanel /></ExtSlot>
          <ExtSlot><ChromeAvatar>D</ChromeAvatar></ExtSlot>
        </ExtRow>
        <ErrorPill>
          Error
          <MdMoreVert size={19} />
        </ErrorPill>
      </AddressRow>

      <Docs>
        <DocsHeader>
          <SlidesLogo />
          <TitleBlock>
            <TitleRow>
              <DocTitle>Portfolio</DocTitle>
              <MdOutlineStarBorder size={20} />
              <MdOutlineDriveFileMove size={20} />
              <MdOutlineCloudDone size={20} />
            </TitleRow>
            <MenuBar>
              {MENU.map((m) => (
                <span key={m}>{m}</span>
              ))}
            </MenuBar>
          </TitleBlock>
          <HeaderActions>
            <HeaderIcon><MdHistory size={27} /></HeaderIcon>
            <HeaderIcon><CommentsIcon /></HeaderIcon>
            <CameraGroup>
              <CameraIcon />
              <MdArrowDropDown size={20} />
            </CameraGroup>
            <SlideshowButton>
              <SlideshowLabel>Slideshow</SlideshowLabel>
              <SlideshowCaret><MdArrowDropDown size={20} /></SlideshowCaret>
            </SlideshowButton>
            <ShareButton>
              <MdOutlinePeople size={20} />
              Share
            </ShareButton>
            <DocAvatar>D</DocAvatar>
          </HeaderActions>
        </DocsHeader>

        <Toolbar>
          <ToolButton><MdSearch size={21} /></ToolButton>
          <ToolButton $ml={1}><MdAdd size={20} /></ToolButton>
          <ToolButton $w={12}><MdArrowDropDown size={18} /></ToolButton>
          <ToolSep />
          <ToolButton><Undo2 size={17} strokeWidth={1.7} /></ToolButton>
          <ToolButton><Redo2 size={17} strokeWidth={1.7} /></ToolButton>
          <ToolButton><MdOutlinePrint size={21} /></ToolButton>
          <ToolButton $faded><MdOutlineFormatPaint size={19} /></ToolButton>
          <ToolButton><MdZoomIn size={20} /></ToolButton>
          <FitSelect>
            Fit
            <MdArrowDropDown size={18} />
          </FitSelect>
          <ToolSep $l={9} $r={4} />
          <ToolButton $w={30} $active><SelectArrow size={18} /></ToolButton>
          <ToolButton $ml={1}><TextBoxIcon /></ToolButton>
          <ToolButton><MdOutlineImage size={20} /></ToolButton>
          <ToolButton $ml={2}><ShapeIcon /></ToolButton>
          <ToolButton><LineIcon /></ToolButton>
          <ToolButton $w={12}><MdArrowDropDown size={18} /></ToolButton>
          <ToolSep />
          <ToolButton><MdOutlineAddComment size={21} /></ToolButton>
          <ToolSep $l={3} $r={0} />
          <ToolText $w={80} $l={14} $r={12}>Background</ToolText>
          <ToolSep $l={0} $r={0} />
          <ToolText $w={46} $l={11} $r={10}>Layout</ToolText>
          <ToolSep $l={0} $r={0} />
          <ToolText $w={45} $l={12} $r={14}>Theme</ToolText>
          <ToolSep $l={0} $r={0} />
          <ToolText $w={66} $l={12} $r={13}>Transition</ToolText>
          <ToolbarEnd>
            <ToolButton $w={26}><PointerOutline /></ToolButton>
            <ToolButton $w={16}><MdArrowDropDown size={18} /></ToolButton>
            <ToolButton $w={30}><MdExpandLess size={20} /></ToolButton>
          </ToolbarEnd>
        </Toolbar>

        <Workspace>
          <Filmstrip>
            <SlideList>
              {THUMBS.map(({ n, Slide, selected }) => (
                <ThumbRow key={n}>
                  <ThumbNumber>{n}</ThumbNumber>
                  <Thumb $selected={selected}>
                    <ThumbInner>
                      <ThumbZoom>
                        <Slide />
                      </ThumbZoom>
                    </ThumbInner>
                  </Thumb>
                </ThumbRow>
              ))}
              <FilmScrollbar />
            </SlideList>
            <FilmFooter>
              <MdOutlineGridView size={22} />
              <MdChevronLeft size={24} />
            </FilmFooter>
          </Filmstrip>

          <Editor>
            <HRuler>
              <HorizontalRuler />
            </HRuler>
            <VRuler>
              <VerticalRuler />
            </VRuler>
            <Stage>
              <ChallengesSlide framed />
            </Stage>
            <ResizeHandle />
            <Notes>Click to add speaker notes</Notes>
            <StageScrollbar />
            <SidePanelToggle>
              <MdChevronLeft size={22} />
            </SidePanelToggle>
          </Editor>
        </Workspace>
      </Docs>

      <Taskbar>
        <StartButton><WindowsLogo /></StartButton>
        <SearchBox>
          <SearchGlass />
          <SearchLabel>Type here to search</SearchLabel>
          <Dreidels />
        </SearchBox>
        <TaskView><TaskViewIcon /></TaskView>
        {TASK_APPS.map(({ Icon, active, open, badge }, i) => (
          <TaskApp key={i} $active={active} $open={open}>
            <Icon />
            {badge && <CountBadge>{badge}</CountBadge>}
          </TaskApp>
        ))}
        <Tray>
          <Weather>
            <WeatherIcon>
              <WeatherGlyph />
              <AlertDot>1</AlertDot>
            </WeatherIcon>
            <Temp>25°C</Temp>
            Mostly clear
          </Weather>
          {TRAY_ICONS.map((g, i) => (
            <TrayIcon key={i}>
              <svg width="24" height="24" viewBox="0 0 24 24">{g}</svg>
            </TrayIcon>
          ))}
          <Clock>
            <div>5:35 AM</div>
            <div>12/7/2023</div>
          </Clock>
          <Notify>
            <svg width="20" height="18" viewBox="0 0 20 18">
              <path d="M1 1h18v12h-9l-3 4v-4H1z" fill="#fff" />
              <path d="M4 5h12M4 8.500h12" stroke="#555" />
            </svg>
            <NotifyBadge>1</NotifyBadge>
          </Notify>
          <ShowDesktop />
        </Tray>
      </Taskbar>
    </Page>
  );
}
